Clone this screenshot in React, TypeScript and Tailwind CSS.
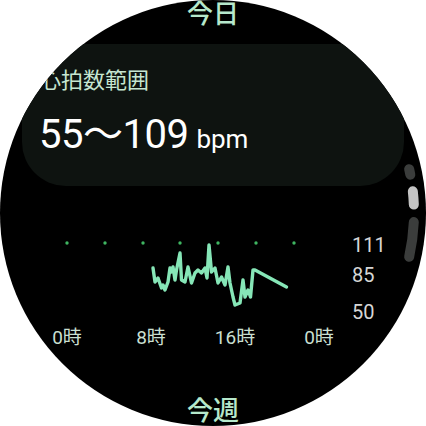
const pts: [number, number][] = [
  [153, 268], [155, 282], [158, 278], [161.5, 288], [163, 285], [165, 290], [168, 282],
  [170, 268], [171.5, 272], [173, 267], [175, 280], [176.5, 270], [180, 253], [181.5, 280],
  [185, 282], [188, 267], [191.5, 283], [195, 273], [198, 270], [201.5, 273], [205, 268],
  [207, 278], [209, 245], [211.5, 272], [215, 268], [218, 283], [221.5, 277], [225, 285],
  [228, 267], [230, 283], [233, 297], [235, 305], [240, 303], [243, 280], [245, 297],
  [248, 290], [250.5, 297], [253, 270], [255, 270], [286.5, 287],
]

const dots = [67, 105, 143, 180, 218, 256, 294]

function arc(a0: number, a1: number) {
  const r = 201
  const rad = (d: number) => (d * Math.PI) / 180
  const x0 = 213 + r * Math.cos(rad(a0))
  const y0 = 213 + r * Math.sin(rad(a0))
  const x1 = 213 + r * Math.cos(rad(a1))
  const y1 = 213 + r * Math.sin(rad(a1))
  return `M ${x0} ${y0} A ${r} ${r} 0 0 1 ${x1} ${y1}`
}

export default function App() {
  return (
    <div className="w-[426px] h-[426px] bg-white">
      <div className="relative w-[426px] h-[426px] rounded-full bg-black overflow-hidden flex flex-col items-center font-['Roboto','Noto_Sans_CJK_JP',sans-serif]">
        <div className="h-[44px] shrink-0 -mt-[3px] text-[26px] leading-[30px] font-medium text-[#b6e8cb] font-['Noto_Sans_CJK_JP',sans-serif]">今日</div>

        {/* range card */}
        <div className="mt-[3px] w-[382px] h-[142px] shrink-0 rounded-[44px] bg-[#0e1310] pl-[17px] pt-[20px]">
          <div className="text-[22px] leading-[28px] text-[#c6e6d1] font-['Noto_Sans_CJK_JP',sans-serif]">心拍数範囲</div>
          <div className="mt-[20px] flex items-baseline text-white">
            <span className="text-[40px] leading-[46px] tracking-[-0.5px]">55～109</span>
            <span className="ml-[8px] text-[26px]">bpm</span>
          </div>
        </div>

        {/* chart */}
        <div className="mt-[44px] w-full flex shrink-0">
          <svg width="340" height="90" viewBox="0 230 340 90" className="shrink-0">
            {dots.map(x => (
              <circle key={x} cx={x} cy={243} r={1.7} fill="#3fb561" />
            ))}
            <polyline
              points={pts.map(p => p.join(',')).join(' ')}
              fill="none"
              stroke="#86e6b7"
              strokeWidth={3.4}
              strokeLinejoin="round"
              strokeLinecap="round"
            />
          </svg>
          <div className="ml-[12px] flex flex-col text-[20px] leading-none text-[#d6d6d6]">
            <span className="mt-[5px]">111</span>
            <span className="mt-[10px]">85</span>
            <span className="mt-[17px]">50</span>
          </div>
        </div>

        <div className="mt-[4px] w-full pl-[25px] flex text-[19px] leading-[24px] text-[#c9dfd0] font-['Roboto','Noto_Sans_CJK_JP',sans-serif]">
          <span className="w-[84px] text-center">0時</span>
          <span className="w-[84px] text-center">8時</span>
          <span className="w-[84px] text-center">16時</span>
          <span className="w-[84px] text-center">0時</span>
        </div>

        <div className="mt-[44px] text-[26px] leading-[30px] font-medium text-[#b6e8cb] font-['Noto_Sans_CJK_JP',sans-serif]">今週</div>

        {/* scroll indicator */}
        <svg width="426" height="426" className="absolute left-0 top-0 pointer-events-none">
          <path d={arc(-12.6, -11.0)} stroke="#3b3d3c" strokeWidth={10} strokeLinecap="round" fill="none" />
          <path d={arc(-6.2, -2.4)} stroke="#c4c4c4" strokeWidth={10} strokeLinecap="round" fill="none" />
          <path d={arc(2.6, 12.6)} stroke="#3b3d3c" strokeWidth={10} strokeLinecap="round" fill="none" />
        </svg>
      </div>
    </div>
  )
}
